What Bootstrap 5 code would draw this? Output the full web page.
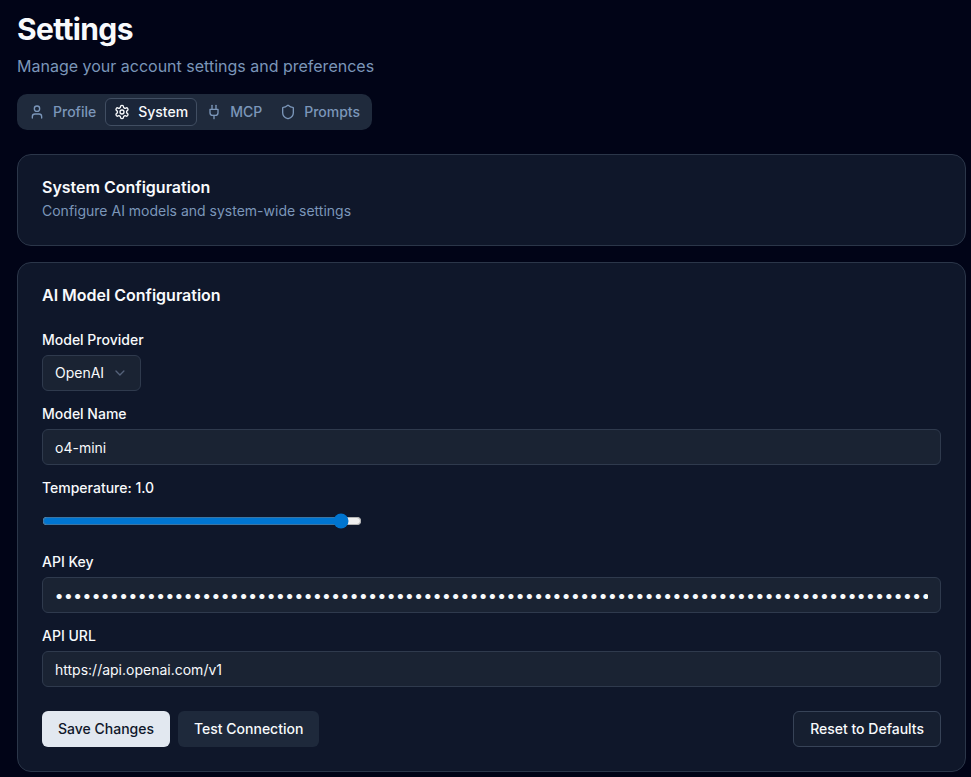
<!DOCTYPE html>
<html lang="en"><head><meta charset="utf-8">
<link href="https://cdn.jsdelivr.net/npm/bootstrap@5.3.0/dist/css/bootstrap.min.css" rel="stylesheet">
<style>
html,body{height:777px;overflow:hidden}
body{background:#010417;color:#f8fafc;font-family:Inter,"Liberation Sans",sans-serif;padding:0 5px 0 17px}
.pg-title{font-size:30px;font-weight:700;line-height:36px;letter-spacing:-.65px;margin:11px 0 0}
.pg-sub{font-size:16px;line-height:24px;color:#7b96b9;margin:7px 0 0}
.tabbar{background:#1f2a3c;border-radius:10px;padding:4px 4px 4px 3px;height:36px;margin:16px 0 24px;width:355px}
.tabitem{height:28px;padding:0 8px 1px;font-size:14px;font-weight:500;color:#7b96b9;border-radius:6px;border:1px solid transparent;gap:8px}
.tabitem.on{background:#1b2639;color:#f8fafc;border-color:#414e62}
.panel{background:#0f172a;border:1px solid #2b3649;border-radius:14px;padding:24px}
.p-head{height:92px;margin-bottom:16px}
.p-title{font-size:16px;font-weight:600;line-height:16px;margin:0}
.p-title.gapped{margin-bottom:30px}
.p-desc{font-size:14px;line-height:20px;color:#7b96b9;margin:6px 0 0}
.p-main{height:510px}
.fld-label{font-size:14px;font-weight:500;line-height:14px;margin:0 0 8px;display:block}
.fld{display:block;width:100%;height:36px;background:#1a2333;border:1px solid #2f3a4d;border-radius:6px;padding:0 12px;color:#f8fafc;font-size:14px;font-family:inherit;outline:0}
.fld[type=password]{font-size:16.4px;padding-left:11.5px}
.pick{display:flex;align-items:center;gap:8px;width:99px;height:36px;background:#1a2333;border:1px solid #2f3a4d;border-radius:6px;padding:0 12px;font-size:14px;color:#f8fafc}
.pick span{margin-top:-2px}
.rng{display:block;width:320px;accent-color:#0075d0;margin:0;height:36px}
.act{height:36px;font-size:14px;font-weight:500;border-radius:6px;padding:0 16px 2px;border:0}
.act-a{background:#e2e8f0;color:#0f172a}
.act-b{background:#1e293b;color:#f8fafc}
.act-c{background:#161f30;color:#f8fafc;border:1px solid #374357}
</style></head><body>
<h1 class="pg-title">Settings</h1>
<p class="pg-sub">Manage your account settings and preferences</p>
<div class="tabbar d-flex">
<div class="tabitem d-flex align-items-center"><svg width="16" height="16" viewBox="0 0 24 24" fill="none" stroke="currentColor" stroke-width="2" stroke-linecap="round" stroke-linejoin="round"><path d="M19 21v-2a4 4 0 0 0-4-4H9a4 4 0 0 0-4 4v2"/><circle cx="12" cy="7" r="4"/></svg>Profile</div>
<div class="tabitem on d-flex align-items-center"><svg width="16" height="16" viewBox="0 0 24 24" fill="none" stroke="currentColor" stroke-width="2" stroke-linecap="round" stroke-linejoin="round"><path d="M12.22 2h-.44a2 2 0 0 0-2 2v.18a2 2 0 0 1-1 1.73l-.43.25a2 2 0 0 1-2 0l-.15-.08a2 2 0 0 0-2.73.73l-.22.38a2 2 0 0 0 .73 2.73l.15.1a2 2 0 0 1 1 1.72v.51a2 2 0 0 1-1 1.74l-.15.09a2 2 0 0 0-.73 2.73l.22.38a2 2 0 0 0 2.73.73l.15-.08a2 2 0 0 1 2 0l.43.25a2 2 0 0 1 1 1.73V20a2 2 0 0 0 2 2h.44a2 2 0 0 0 2-2v-.18a2 2 0 0 1 1-1.73l.43-.25a2 2 0 0 1 2 0l.15.08a2 2 0 0 0 2.73-.73l.22-.39a2 2 0 0 0-.73-2.73l-.15-.08a2 2 0 0 1-1-1.74v-.5a2 2 0 0 1 1-1.74l.15-.09a2 2 0 0 0 .73-2.73l-.22-.38a2 2 0 0 0-2.73-.73l-.15.08a2 2 0 0 1-2 0l-.43-.25a2 2 0 0 1-1-1.73V4a2 2 0 0 0-2-2z"/><circle cx="12" cy="12" r="3"/></svg>System</div>
<div class="tabitem d-flex align-items-center"><svg width="16" height="16" viewBox="0 0 24 24" fill="none" stroke="currentColor" stroke-width="2" stroke-linecap="round" stroke-linejoin="round"><path d="M12 22v-5"/><path d="M9 8V2"/><path d="M15 8V2"/><path d="M18 8v5a4 4 0 0 1-4 4h-4a4 4 0 0 1-4-4V8Z"/></svg>MCP</div>
<div class="tabitem d-flex align-items-center"><svg width="16" height="16" viewBox="0 0 24 24" fill="none" stroke="currentColor" stroke-width="2" stroke-linecap="round" stroke-linejoin="round"><path d="M20 13c0 5-3.5 7.5-7.66 8.95a1 1 0 0 1-.67-.01C7.5 20.5 4 18 4 13V6a1 1 0 0 1 1-1c2 0 4.5-1.2 6.24-2.72a1.17 1.17 0 0 1 1.52 0C14.51 3.81 17 5 19 5a1 1 0 0 1 1 1z"/></svg>Prompts</div>
</div>
<section class="panel p-head"><h2 class="p-title">System Configuration</h2><p class="p-desc">Configure AI models and system-wide settings</p></section>
<section class="panel p-main">
<h2 class="p-title gapped">AI Model Configuration</h2>
<label class="fld-label">Model Provider</label>
<div class="pick mb-3"><span>OpenAI</span><svg class="ms-auto" width="16" height="16" viewBox="0 0 24 24" fill="none" stroke="#55627a" stroke-width="2" stroke-linecap="round" stroke-linejoin="round"><path d="m6 9 6 6 6-6"/></svg></div>
<label class="fld-label">Model Name</label>
<input class="fld mb-3" value="o4-mini">
<label class="fld-label">Temperature: 1.0</label>
<input type="range" class="rng mb-3" min="0" max="1" step="0.001" value="0.958">
<label class="fld-label">API Key</label>
<input class="fld mb-3" type="password" value="xxxxxxxxxxxxxxxxxxxxxxxxxxxxxxxxxxxxxxxxxxxxxxxxxxxxxxxxxxxxxxxxxxxxxxxxxxxxxxxxxxxxxxxxxxxxxxxxxxxxxxxxxxxxxxx">
<label class="fld-label">API URL</label>
<input class="fld mb-4" value="https://api.openai.com/v1">
<div class="d-flex gap-2"><button class="act act-a">Save Changes</button><button class="act act-b">Test Connection</button><button class="act act-c ms-auto">Reset to Defaults</button></div>
</section>
</body></html>
